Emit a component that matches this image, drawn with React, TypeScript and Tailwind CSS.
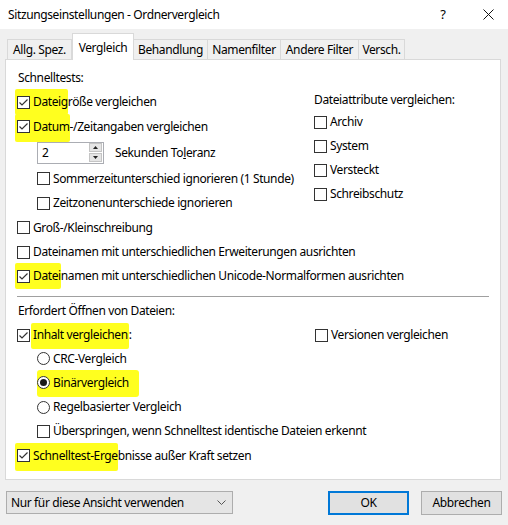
import React from 'react';

// Windows style session settings dialog
const HL = 'bg-[#ffff1f]';

function Box({ checked = false }: { checked?: boolean }) {
  return (
    <span className="inline-flex w-[13px] h-[13px] shrink-0 border border-[#333] bg-white items-center justify-center">
      {checked && (
        <svg width="11" height="11" viewBox="0 0 11 11">
          <polyline points="1.5,5.5 4,8 9.5,2.5" fill="none" stroke="#333" strokeWidth="1.2" />
        </svg>
      )}
    </span>
  );
}

function Radio({ on = false }: { on?: boolean }) {
  return (
    <span className="inline-flex w-[13px] h-[13px] shrink-0 rounded-full border border-[#333] bg-white items-center justify-center">
      {on && <span className="w-[7px] h-[7px] rounded-full bg-[#1a1a1a]" />}
    </span>
  );
}

function Check({ label, checked, h = 'h-[24px]' }: { label: string; checked?: boolean; h?: string }) {
  return (
    <div className={`flex items-center ${h}`}>
      <Box checked={checked} />
      <span className="ml-[3px]">{label}</span>
    </div>
  );
}

const tabs = [
  { name: 'Allg. Spez.', w: 'w-[65px]' },
  { name: 'Vergleich', w: 'w-[62px]', active: true },
  { name: 'Behandlung', w: 'w-[75px]' },
  { name: 'Namenfilter', w: 'w-[74px]' },
  { name: 'Andere Filter', w: 'w-[79px]' },
  { name: 'Versch.', w: 'w-[47px]' },
];

export default function App() {
  return (
    <div className="w-[508px] h-[525px] bg-[#f0f0f0] font-['Segoe_UI','Noto_Sans',sans-serif] text-[12px] tracking-[-0.38px] text-black overflow-hidden flex flex-col">
      {/* Title bar */}
      <div className="h-[29px] bg-white flex items-center shrink-0">
        <span className="pl-[8px] flex-1">Sitzungseinstellungen - Ordnervergleich</span>
        <span className="w-[20px] text-center text-[13px] mr-[25px]">?</span>
        <span className="w-[20px] flex justify-center mr-[10px]">
          <svg width="11" height="11" viewBox="0 0 11 11">
            <path d="M0.5 0.5 L10.5 10.5 M10.5 0.5 L0.5 10.5" stroke="#111" strokeWidth="1" />
          </svg>
        </span>
      </div>

      {/* Tabs */}
      <div className="h-[30px] flex items-end pl-[7px] shrink-0">
        {tabs.map((t) =>
          t.active ? (
            <div
              key={t.name}
              className={`${t.w} h-[27px] -mb-[1px] relative z-10 bg-white border border-b-0 border-[#d9d9d9] flex items-start justify-center pt-[5px]`}
            >
              {t.name}
            </div>
          ) : (
            <div
              key={t.name}
              className={`${t.w} h-[20px] border border-b-0 border-[#d9d9d9] -ml-[1px] first:ml-0 flex items-center justify-center`}
            >
              {t.name}
            </div>
          )
        )}
      </div>

      {/* Panel */}
      <div className="ml-[5px] mr-[7px] h-[421px] bg-white border border-[#d9d9d9] pl-[11px] pr-[10px] pt-[6px] shrink-0">
        <div className="flex">
          <div className="w-[297px]">
            <div className="h-[24px] flex items-center pl-[1px]">Schnelltests:</div>
            <div className="flex items-center h-[24px]">
              <span className={`flex items-center ${HL} -ml-[2px] pl-[2px] py-[4px] rounded-[2px]`}>
                <Box checked />
                <span className="ml-[3px]">Dateig</span>
              </span>
              <span>röße vergleichen</span>
            </div>
            <div className="flex items-center h-[25px]">
              <span className={`flex items-center ${HL} -ml-[2px] pl-[2px] pt-[4px] pb-[6px] -mb-[2px] rounded-[2px]`}>
                <Box checked />
                <span className="ml-[3px]">Datum</span>
              </span>
              <span>-/Zeitangaben vergleichen</span>
            </div>
            <div className="flex items-center h-[27px] pl-[20px]">
              <div className="w-[67px] h-[22px] border border-[#abadb3] bg-white flex items-center justify-between pl-[4px] pr-[1px]">
                <span>2</span>
                <div className="flex flex-col gap-[1px]">
                  <span className="w-[13px] h-[9px] bg-[#e5e5e5] border border-[#c4c4c4] flex items-center justify-center">
                    <svg width="5" height="3" viewBox="0 0 5 3"><path d="M0 3 L2.5 0 L5 3 Z" fill="#222" /></svg>
                  </span>
                  <span className="w-[13px] h-[9px] bg-[#e5e5e5] border border-[#c4c4c4] flex items-center justify-center">
                    <svg width="5" height="3" viewBox="0 0 5 3"><path d="M0 0 L2.5 3 L5 0 Z" fill="#222" /></svg>
                  </span>
                </div>
              </div>
              <span className="ml-[11px]">
                Sekunden To<u>l</u>eranz
              </span>
            </div>
            <div className="pl-[20px]">
              <Check label="Sommerzeitunterschied ignorieren (1 Stunde)" h="h-[25px]" />
              <Check label="Zeitzonenunterschiede ignorieren" />
            </div>
          </div>
          <div className="pt-[24px]">
            <div className="h-[20px] flex items-center">Dateiattribute vergleichen:</div>
            <Check label="Archiv" />
            <Check label="System" />
            <Check label="Versteckt" />
            <Check label="Schreibschutz" />
          </div>
        </div>

        <Check label="Groß-/Kleinschreibung" h="h-[25px]" />
        <Check label="Dateinamen mit unterschiedlichen Erweiterungen ausrichten" />
        <div className="flex items-center h-[24px]">
          <span className={`flex items-center ${HL} -ml-[2px] pl-[2px] py-[4px] rounded-[2px]`}>
            <Box checked />
            <span className="ml-[3px]">Datei</span>
          </span>
          <span>namen mit unterschiedlichen Unicode-Normalformen ausrichten</span>
        </div>

        <div className="h-[1px] bg-[#a0a0a0] mt-[8px] mr-[1px]" />

        <div className="h-[24px] flex items-center mt-[2px] pl-[1px]">Erfordert Öffnen von Dateien:</div>
        <div className="flex items-center h-[24px]">
          <div className="w-[298px] flex items-center">
            <Box checked />
            <span className={`ml-[1px] pl-[2px] pr-[1px] pt-[3px] pb-[5px] -mb-[2px] ${HL} rounded-[2px]`}>Inhalt vergleichen</span>
            <span>:</span>
          </div>
          <Check label="Versionen vergleichen" />
        </div>
        <div className="pl-[20px]">
          <div className="flex items-center h-[23px]">
            <Radio />
            <span className="ml-[3px]">CRC-Vergleich</span>
          </div>
          <div className="flex items-center h-[25px]">
            <span className={`flex items-center ${HL} pt-[4px] pb-[5px] pr-[10px] -mb-[1px] rounded-[3px]`}>
              <Radio on />
              <span className="ml-[3px]">Binärvergleich</span>
            </span>
          </div>
          <div className="flex items-center h-[24px]">
            <Radio />
            <span className="ml-[3px]">Regelbasierter Vergleich</span>
          </div>
          <Check label="Überspringen, wenn Schnelltest identische Dateien erkennt" />
        </div>
        <div className="flex items-center h-[25px]">
          <span className={`flex items-center ${HL} -ml-[2px] pl-[2px] pt-[4px] pb-[6px] -mb-[2px] rounded-[2px]`}>
            <Box checked />
            <span className="ml-[3px]">Schnelltest-Erge</span>
          </span>
          <span>bnisse außer Kraft setzen</span>
        </div>
      </div>

      {/* Bottom buttons */}
      <div className="flex items-start mt-[11px] pl-[6px]">
        <div className="w-[227px] h-[23px] bg-[#e5e5e5] border border-[#adadad] flex items-center justify-between pl-[4px] pr-[6px]">
          <span>Nur für diese Ansicht verwenden</span>
          <svg width="9" height="5" viewBox="0 0 9 5">
            <path d="M0.5 0.5 L4.5 4.5 L8.5 0.5" fill="none" stroke="#555" strokeWidth="1" />
          </svg>
        </div>
        <div className="ml-[95px] w-[81px] h-[24px] bg-[#e1e1e1] border-2 border-[#0078d7] flex items-center justify-center">
          OK
        </div>
        <div className="ml-[12px] w-[81px] h-[24px] bg-[#e1e1e1] border border-[#adadad] flex items-center justify-center">
          Abbrechen
        </div>
      </div>
    </div>
  );
}
